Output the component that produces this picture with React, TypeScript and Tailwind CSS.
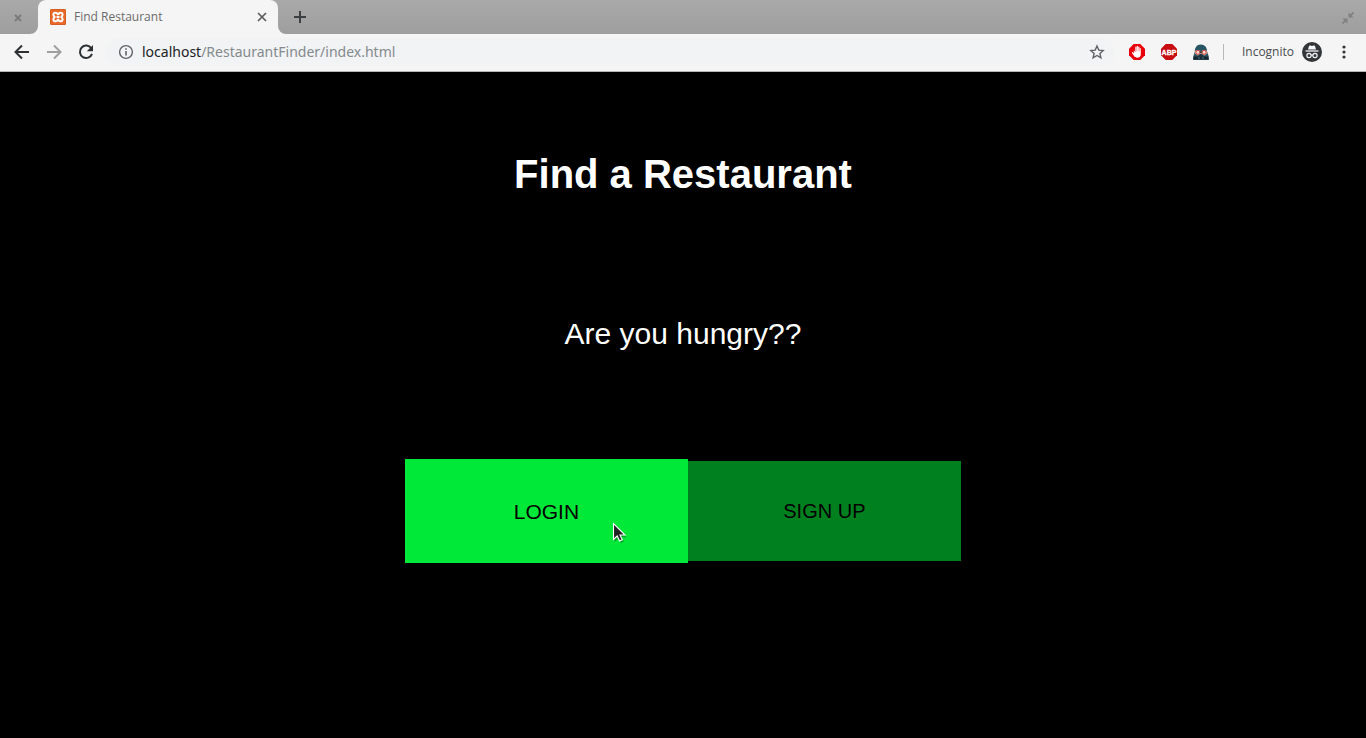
import React from 'react';

function XamppIcon() {
  return (
    <svg width="16" height="16" viewBox="0 0 16 16" aria-hidden="true">
      <rect width="16" height="16" rx="1.5" fill="#e8692a" />
      <rect x="0.5" y="0.5" width="15" height="15" rx="1" fill="none" stroke="#c9541c" strokeOpacity="0.6" />
      <g fill="none" stroke="#fff" strokeWidth="2">
        <path d="M8 6.2C7.4 2.8 3.4 3 3.4 5.5 3.4 6.8 4 7.4 4.6 8 4 8.6 3.4 9.2 3.4 10.5 3.4 13 7.4 13.2 8 9.8" />
        <path d="M8 6.2C8.6 2.8 12.6 3 12.6 5.5 12.6 6.8 12 7.4 11.4 8 12 8.6 12.6 9.2 12.6 10.5 12.6 13 8.6 13.2 8 9.8" />
        <path d="M6.5 8h3" />
      </g>
    </svg>
  );
}

function TabStrip() {
  return (
    <div className="flex h-[34px] bg-linear-to-b from-[#a9a9a9] to-[#9e9e9e]">
      <div className="flex w-[38px] items-center justify-center rounded-br-lg pt-px pr-0.5">
        <button aria-label="Close window" className="flex">
          <svg width="8" height="8" viewBox="0 0 8 8" stroke="#7b7b7b" strokeWidth="2">
            <path d="M1 1l6 6M7 1L1 7" />
          </svg>
        </button>
      </div>
      <div className="relative flex h-full w-60 items-center rounded-t-lg bg-[#f5f5f5] pr-[11px] pl-3">
        <svg className="absolute bottom-0 -left-2" width="8" height="8" fill="#f5f5f5" aria-hidden="true">
          <path d="M8 0v8H0a8 8 0 0 0 8-8z" />
        </svg>
        <svg className="absolute -right-2 bottom-0" width="8" height="8" fill="#f5f5f5" aria-hidden="true">
          <path d="M0 0v8h8a8 8 0 0 1-8-8z" />
        </svg>
        <XamppIcon />
        <span className="ml-2 flex-1 text-xs text-[#6b6b6b]">Find Restaurant</span>
        <button aria-label="Close tab" className="flex">
          <svg width="10" height="10" viewBox="0 0 10 10" stroke="#5a5c5e" strokeWidth="1.7">
            <path d="M1 1l8 8M9 1L1 9" />
          </svg>
        </button>
      </div>
      <button aria-label="New tab" className="ml-4 flex items-center">
        <svg width="12" height="12" viewBox="0 0 12 12" stroke="#3c4043" strokeWidth="2">
          <path d="M6 0v12M0 6h12" />
        </svg>
      </button>
      <button aria-label="Restore window" className="mr-3 ml-auto flex items-center pt-0.5">
        <svg width="12" height="12" viewBox="0 0 12 12" fill="#808080" stroke="#808080">
          <path d="M6.5 0.5v5h5z M5.5 11.5v-5h-5z" stroke="none" />
          <path d="M8 4l3.5-3.5M4 8L.5 11.5" strokeWidth="1.8" />
        </svg>
      </button>
    </div>
  );
}

function Extensions() {
  return (
    <div className="flex items-center gap-4">
      <button aria-label="Ad blocker" className="flex">
        <svg width="16" height="16" viewBox="0 0 16 16">
          <path d="M4.7 0h6.6L16 4.7v6.6L11.3 16H4.7L0 11.3V4.7z" fill="#e8000b" />
          <path d="M4.8 6.2v3.2L3.8 8.3c-.6-.5-1.1.1-.8.6l2.4 3.7c.5.8 1.3 1.2 2.6 1.2 2.5 0 3.8-1.3 3.8-3.6V4.6c0-.8-1.1-.8-1.1 0v3h-.3V3.1c0-.9-1.2-.9-1.2 0v4.2h-.3V2.5c0-.9-1.2-.9-1.2 0v4.8h-.3V3.2c0-.8-1.1-.8-1.1 0v5z" fill="#fff" />
        </svg>
      </button>
      <button aria-label="Adblock Plus" className="flex">
        <svg width="16" height="16" viewBox="0 0 16 16">
          <path d="M4.7 0h6.6L16 4.7v6.6L11.3 16H4.7L0 11.3V4.7z" fill="#c70d12" />
          <text x="8" y="10.8" textAnchor="middle" fontSize="7" fontWeight="700" fill="#fff" stroke="#fff" strokeWidth="0.3" fontFamily="Liberation Sans, sans-serif">ABP</text>
        </svg>
      </button>
      <button aria-label="Privacy extension" className="flex">
        <svg width="16" height="16" viewBox="0 0 16 16">
          <path d="M1.8 8C1.6 3.5 3.8.5 7.6.4c4-.1 6.6 2.8 6.6 7.6l1.6 4.5V16H.2v-3.5z" fill="#285563" />
          <path d="M1 12.5h14l.8 3H.2z" fill="#19252e" />
          <path d="M2 6.8Q4 5.4 8 7q4-1.6 6-.2v2.8l-2.5 2L8 9.5l-3.5 2.1L2 9.6z" fill="#e7a698" />
          <circle cx="4.9" cy="8.3" r="2" fill="#f8d9d2" stroke="#cc463e" />
          <circle cx="11.1" cy="8.3" r="2" fill="#f8d9d2" stroke="#cc463e" />
          <path d="M6.8 8h2.4" stroke="#252b30" strokeWidth="1.5" />
          <path d="M8 9.5l3.3 3.8H4.7z" fill="#1e313b" />
          <path d="M5 14h2M9 14h2" stroke="#427c8b" />
        </svg>
      </button>
    </div>
  );
}

function Toolbar() {
  return (
    <div className="flex h-[38px] items-center border-b border-[#b4b4b4] bg-[#f5f5f5] pb-px">
      <div className="flex items-center gap-4 pl-3.5">
        <button aria-label="Back" className="flex">
          <svg width="16" height="16" viewBox="0 0 16 16" fill="none" stroke="#2e3134" strokeWidth="2">
            <path d="M15 8H2M8 1.5L1.5 8 8 14.5" />
          </svg>
        </button>
        <button aria-label="Forward" className="flex">
          <svg width="16" height="16" viewBox="0 0 16 16" fill="none" stroke="#a0a0a0" strokeWidth="2">
            <path d="M1 8h13M8 1.5L14.5 8 8 14.5" />
          </svg>
        </button>
        <button aria-label="Reload" className="flex">
          <svg width="16" height="16" viewBox="0 0 16 16">
            <path d="M13.3 4.3A6.2 6.2 0 1 0 14 9.8" fill="none" stroke="#2e3134" strokeWidth="2" />
            <path d="M15 1v6.2H8.8z" fill="#2e3134" />
          </svg>
        </button>
      </div>
      <div className="ml-3 flex h-7 flex-1 items-center rounded-full bg-[#f1f3f4] pr-2.5 pl-3">
        <svg width="16" height="16" viewBox="0 0 16 16" aria-hidden="true">
          <circle cx="8" cy="8" r="6.4" fill="none" stroke="#5f6368" strokeWidth="1.4" />
          <path d="M7.2 4.2h1.6v1.6H7.2zM7.2 7h1.6v4.6H7.2z" fill="#5f6368" />
        </svg>
        <a href="#" className="ml-2 flex-1 font-['Noto_Sans',sans-serif] text-sm text-[#858a8e]">
          <span className="text-[#202124]">localhost</span>/RestaurantFinder/index.html
        </a>
        <button aria-label="Bookmark this page" className="flex">
          <svg width="16" height="16" viewBox="0 0 16 16" fill="none" stroke="#5f6368" strokeWidth="1.4">
            <path d="M8 2l1.8 4.1 4.4.4-3.3 3 1 4.4L8 11.5l-3.9 2.4 1-4.4-3.3-3 4.4-.4z" />
          </svg>
        </button>
      </div>
      <div className="ml-3.5 flex items-center">
        <Extensions />
        <div className="mr-[18px] ml-3.5 h-4 w-px bg-[#b9b9b9]" />
        <span className="text-xs text-[#4a4c4f]">Incognito</span>
        <svg className="ml-2" width="20" height="20" viewBox="0 0 20 20" aria-hidden="true">
          <circle cx="10" cy="10" r="10" fill="#323639" />
          <path d="M6 7.5l1-3.4c.2-.6.7-.8 1.3-.5 1.1.4 2.3.4 3.4 0 .6-.3 1.1-.1 1.3.5l1 3.4z" fill="#f5f5f5" />
          <path d="M3.5 9h13" stroke="#f5f5f5" strokeWidth="1.3" />
          <g fill="none" stroke="#f5f5f5" strokeWidth="1.2">
            <circle cx="7" cy="13.5" r="2.1" />
            <circle cx="13" cy="13.5" r="2.1" />
            <path d="M9.1 13.2q.9-.6 1.8 0" />
          </g>
        </svg>
        <button aria-label="Menu" className="mr-5 ml-5 flex">
          <svg width="4" height="14" viewBox="0 0 4 14" fill="#323639">
            <circle cx="2" cy="2" r="1.6" />
            <circle cx="2" cy="7" r="1.6" />
            <circle cx="2" cy="12" r="1.6" />
          </svg>
        </button>
      </div>
    </div>
  );
}

function Pointer() {
  return (
    <svg className="absolute top-[63px] left-[207px]" width="17" height="24" viewBox="0 0 17 24" aria-hidden="true">
      <path d="M2.5 3v17l4-3.6 2.3 4.6 3-1.4-2.2-4.3h5z" fill="#000" opacity="0.3" />
      <path d="M1.5 1.5v16l3.7-3.5 2.4 5 2.7-1.2L8 13h5z" fill="#222" stroke="#fff" strokeWidth="1.1" />
    </svg>
  );
}

export default function App() {
  return (
    <div className="flex min-h-screen flex-col bg-black">
      <header className="font-['Open_Sans',sans-serif]">
        <TabStrip />
        <Toolbar />
      </header>
      <main className="flex flex-1 flex-col items-center pt-20 font-['Liberation_Sans',Arial,sans-serif] text-white">
        <h1 className="text-[40px] leading-[44px] font-bold">Find a Restaurant</h1>
        <p className="mt-[121px] text-[30px] leading-[34px]">Are you hungry??</p>
        <div className="mt-[108px] flex w-full items-center justify-center text-black">
          <button className="relative h-[104px] w-[20.7%] bg-[#00e838] pt-0.5 text-[21px]">
            LOGIN
            <Pointer />
          </button>
          <button className="h-[100px] w-1/5 bg-[#00801e] text-xl">SIGN UP</button>
        </div>
      </main>
    </div>
  );
}
